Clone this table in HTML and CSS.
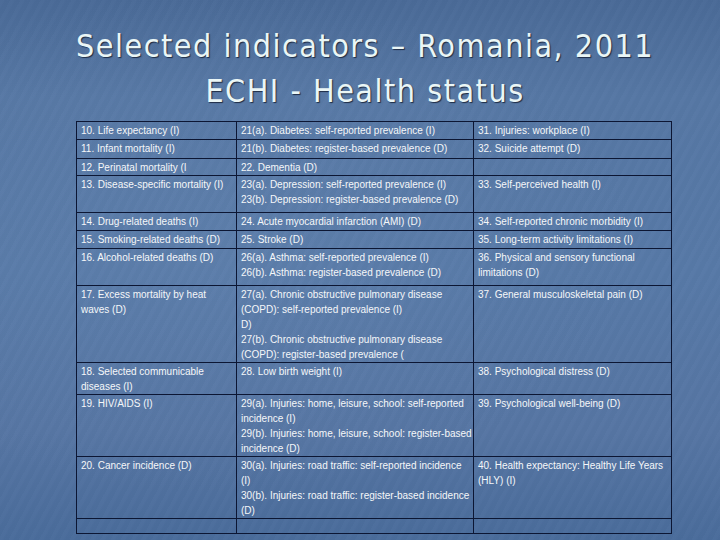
FILE: index.html
```html
<!DOCTYPE html>
<html>
<head>
<meta charset="utf-8">
<link rel="stylesheet" href="styles.css">
</head>
<body>
<div class="slide">
  <h1 class="title">Selected indicators – Romania, 2011<br>ECHI - Health status</h1>
  <table class="grid">
    <colgroup><col class="c1"><col class="c2"><col class="c3"></colgroup>
    <tr class="r18"><td>10. Life expectancy (I)</td><td>21(a). Diabetes: self-reported prevalence (I)</td><td>31. Injuries: workplace (I)</td></tr>
    <tr class="r19"><td>11. Infant mortality (I)</td><td>21(b). Diabetes: register-based prevalence (D)</td><td>32. Suicide attempt (D)</td></tr>
    <tr class="r15"><td>12. Perinatal mortality (I</td><td>22. Dementia (D)</td><td></td></tr>
    <tr class="r37"><td>13. Disease-specific mortality (I)</td><td>23(a). Depression: self-reported prevalence (I)<br>23(b). Depression: register-based prevalence (D)</td><td>33. Self-perceived health (I)</td></tr>
    <tr class="r18"><td>14. Drug-related deaths (I)</td><td>24. Acute myocardial infarction (AMI) (D)</td><td>34. Self-reported chronic morbidity (I)</td></tr>
    <tr class="r18"><td>15. Smoking-related deaths (D)</td><td>25. Stroke (D)</td><td>35. Long-term activity limitations (I)</td></tr>
    <tr class="r37"><td>16. Alcohol-related deaths (D)</td><td>26(a). Asthma: self-reported prevalence (I)<br>26(b). Asthma: register-based prevalence (D)</td><td>36. Physical and sensory functional<br>limitations (D)</td></tr>
    <tr class="r75"><td>17. Excess mortality by heat<br>waves (D)</td><td>27(a). Chronic obstructive pulmonary disease<br>(COPD): self-reported prevalence (I)<br>D)<br>27(b). Chronic obstructive pulmonary disease<br>(COPD): register-based prevalence (</td><td>37. General musculoskeletal pain (D)</td></tr>
    <tr class="r31"><td>18. Selected communicable<br>diseases (I)</td><td>28. Low birth weight (I)</td><td>38. Psychological distress (D)</td></tr>
    <tr class="r61"><td>19. HIV/AIDS (I)</td><td>29(a). Injuries: home, leisure, school: self-reported<br>incidence (I)<br>29(b). Injuries: home, leisure, school: register-based<br>incidence (D)</td><td>39. Psychological well-being (D)</td></tr>
    <tr class="r60"><td>20. Cancer incidence (D)</td><td>30(a). Injuries: road traffic: self-reported incidence<br>(I)<br>30(b). Injuries: road traffic: register-based incidence<br>(D)</td><td>40. Health expectancy: Healthy Life Years<br>(HLY) (I)</td></tr>
    <tr class="r15"><td></td><td></td><td></td></tr>
  </table>
</div>
</body>
</html>
```
FILE: styles.css
```css
html, body {
  margin: 0;
  padding: 0;
}
body {
  width: 720px;
  height: 540px;
  overflow: hidden;
}
.slide {
  width: 720px;
  height: 540px;
  box-sizing: border-box;
  padding-top: 24px;
  background:
    repeating-linear-gradient(118deg, rgba(255,255,255,0.012) 0px, rgba(255,255,255,0.012) 3px, rgba(0,0,0,0.012) 5px, rgba(0,0,0,0.012) 9px),
    radial-gradient(ellipse at 30% 45%, rgba(120,150,190,0.18), rgba(120,150,190,0) 60%),
    linear-gradient(180deg, #4a6a97 0%, #5677a4 18%, #5779a7 50%, #5675a3 80%, #4a6c9b 100%);
}
.title {
  margin: 0;
  padding-left: 10px;
  font-family: "DejaVu Sans Condensed", "DejaVu Sans", sans-serif;
  font-stretch: condensed;
  font-weight: normal;
  font-size: 32px;
  line-height: 45px;
  color: #eaf6f6;
  text-align: center;
  text-shadow: 1px 1px 1px #1e2c45;
  letter-spacing: 1.5px;
}
.grid {
  margin-top: 7px;
  margin-left: 76px;
  width: 595px;
  border-collapse: collapse;
  table-layout: fixed;
  font-family: "Liberation Sans", Arial, sans-serif;
  font-size: 10px;
  line-height: 15px;
  color: #f5f7f9;
}
.c1 { width: 160px; }
.c2 { width: 237px; }
.c3 { width: 198px; }
.grid td {
  border: 1px solid #0c1633;
  vertical-align: top;
  padding: 1px 3px 0 4px;
  white-space: nowrap;
  overflow: visible;
  box-sizing: border-box;
}
.r15 { height: 15px; }
.r18 { height: 18px; }
.r19 { height: 19px; }
.r31 { height: 31px; }
.r37 { height: 37px; }
.r60 { height: 60px; }
.r61 { height: 61px; }
.r75 { height: 75px; }
```
